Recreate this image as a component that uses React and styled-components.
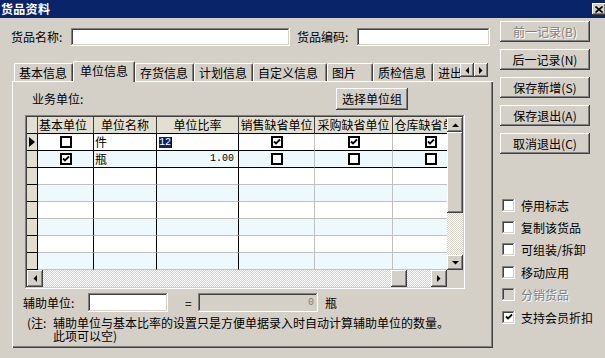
import React from 'react';
import styled, { createGlobalStyle, css } from 'styled-components';

const FONT = '"Noto Sans CJK SC", "Noto Sans", sans-serif';
const MONO = '"Liberation Mono", "DejaVu Sans Mono", monospace';

const GlobalStyle = createGlobalStyle`
  html, body { margin: 0; padding: 0; background: #d4d0c8; }
  body { font-family: ${FONT}; font-size: 12px; color: #000; }
  * { box-sizing: border-box; }
`;

const raised = css`
  background: #d4d0c8;
  box-shadow: inset -1px -1px #404040, inset 1px 1px #ffffff, inset -2px -2px #808080, inset 2px 2px #d4d0c8;
`;

const sunken = css`
  box-shadow: inset -1px -1px #ffffff, inset 1px 1px #808080, inset -2px -2px #d4d0c8, inset 2px 2px #404040;
`;

const checker = css`
  background: repeating-conic-gradient(#ffffff 0% 25%, #d4d0c8 0% 50%) 0 0 / 2px 2px;
`;

const Window = styled.div`
  width: 605px;
  height: 358px;
  background: #d4d0c8;
  overflow: hidden;
  display: flex;
  flex-direction: column;
`;

const TitleBar = styled.div`
  flex: 0 0 18px;
  height: 18px;
  background: #0a246a;
  display: flex;
  align-items: center;
  justify-content: space-between;
  overflow: hidden;
`;

const TitleText = styled.span`
  color: #fff;
  font-weight: bold;
  font-size: 12px;
  line-height: 18px;
  padding-left: 1px;
  letter-spacing: 0.3px;
`;

const CloseButton = styled.div`
  ${raised};
  width: 14px;
  height: 12px;
  margin-right: -1px;
  display: flex;
  align-items: center;
  justify-content: center;
`;

const Main = styled.div`
  flex: 1;
  display: flex;
  padding-top: 3px;
`;

const LeftPane = styled.div`
  flex: 0 0 493px;
  display: flex;
  flex-direction: column;
`;

const FieldRow = styled.div`
  margin-top: 7px;
  height: 18px;
  display: flex;
  align-items: center;
  padding-left: 11px;
`;

const Label = styled.span`
  flex: 0 0 ${(p) => p.$w}px;
  margin-left: ${(p) => p.$ml || 0}px;
  line-height: 14px;
  white-space: nowrap;
  color: ${(p) => (p.$disabled ? '#808080' : '#000')};
  text-shadow: ${(p) => (p.$disabled ? '1px 1px #fff' : 'none')};
`;

const TextBox = styled.div`
  ${sunken};
  flex: 0 0 ${(p) => p.$w}px;
  height: ${(p) => p.$h || 18}px;
  background: ${(p) => (p.$disabled ? '#d4d0c8' : '#fff')};
  color: #808080;
  font-family: ${MONO};
  font-size: 10px;
  display: flex;
  align-items: center;
  justify-content: flex-end;
  padding-right: 4px;
`;

const Tabs = styled.div`
  margin-left: 12px;
  width: 481px;
  display: flex;
  flex-direction: column;
`;

const TabStrip = styled.div`
  margin-top: 15px;
  height: 21px;
  margin-bottom: -1px;
  display: flex;
  align-items: flex-start;
  position: relative;
  z-index: 1;
`;

const TabList = styled.div`
  width: 448px;
  height: 21px;
  padding-left: 2px;
  display: flex;
  align-items: flex-end;
  overflow: hidden;
`;

const Tab = styled.div`
  flex: 0 0 ${(p) => p.$w}px;
  height: ${(p) => (p.$active ? 21 : 18)}px;
  margin-bottom: ${(p) => (p.$active ? 0 : 1)}px;
  padding: ${(p) => (p.$active ? '0 0 2px 6px' : '0 0 0 4px')};
  background: #d4d0c8;
  border-top: 1px solid #fff;
  border-left: 1px solid #fff;
  border-right: 1px solid #404040;
  border-radius: 2px 2px 0 0;
  box-shadow: inset -1px 0 #808080;
  display: flex;
  align-items: center;
  white-space: nowrap;
  line-height: 14px;
`;

const TabArrows = styled.div`
  margin-top: 2px;
  display: flex;
`;

const SmallButton = styled.div`
  ${raised};
  width: ${(p) => p.$w || 14}px;
  height: ${(p) => p.$h || 14}px;
  flex: 0 0 auto;
  display: flex;
  align-items: center;
  justify-content: center;
`;

const Panel = styled.div`
  width: 481px;
  height: 267px;
  padding: 7px 0 0 13px;
  box-shadow: inset 1px 1px #ffffff, inset -1px -1px #404040, inset -2px -2px #808080;
`;

const PanelHeader = styled.div`
  width: 440px;
  height: 22px;
  padding: 0 57px 0 7px;
  display: flex;
  align-items: center;
  justify-content: space-between;
`;

const PushButton = styled.div`
  ${raised};
  width: ${(p) => p.$w || 90}px;
  height: ${(p) => p.$h || 21}px;
  display: flex;
  align-items: center;
  justify-content: center;
  white-space: nowrap;
  line-height: 14px;
  color: ${(p) => (p.$disabled ? '#808080' : '#000')};
  text-shadow: ${(p) => (p.$disabled ? '1px 1px #fff' : 'none')};
`;

const GridFrame = styled.div`
  ${sunken};
  margin-top: 5px;
  width: 440px;
  height: 174px;
  padding: 2px;
  background: #d4d0c8;
  display: flex;
  flex-direction: column;
`;

const GridBody = styled.div`
  display: flex;
  height: 153px;
`;

const GridTable = styled.div`
  width: 420px;
  overflow: hidden;
  background: #fff;
`;

const GridRow = styled.div`
  display: flex;
  height: 17px;
  background: ${(p) => p.$bg};
`;

const Cell = styled.div`
  flex: 0 0 ${(p) => p.$w}px;
  height: 17px;
  border-right: 1px solid ${(p) => p.$line};
  border-bottom: 1px solid ${(p) => p.$bottom};
  background: ${(p) => p.$bg || 'transparent'};
  display: flex;
  align-items: center;
  justify-content: ${(p) => p.$align || 'center'};
  padding: ${(p) => (p.$align === 'flex-start' ? '0 0 0 1px' : p.$align === 'flex-end' ? '0 4px 0 0' : '0')};
  overflow: hidden;
  white-space: nowrap;
  line-height: 14px;
`;

const GridCheck = styled.span`
  width: 12px;
  height: 12px;
  border: 2px solid #000;
  background: #fff;
  display: flex;
  align-items: center;
  justify-content: center;
`;

const Selected = styled.span`
  background: #0a246a;
  color: #fff;
  font-family: ${MONO};
  font-size: 10px;
  line-height: 11px;
  height: 11px;
  margin-left: 1px;
  border-right: 1px solid #000;
`;

const Number = styled.span`
  font-family: ${MONO};
  font-size: 10px;
`;

const VScroll = styled.div`
  width: 16px;
  display: flex;
  flex-direction: column;
`;

const Thumb = styled.div`
  ${raised};
  flex: 0 0 ${(p) => p.$size}px;
`;

const Track = styled.div`
  ${checker};
  flex: ${(p) => (p.$size ? `0 0 ${p.$size}px` : '1')};
`;

const HScroll = styled.div`
  display: flex;
  height: 17px;
`;

const HTrack = styled.div`
  width: 420px;
  display: flex;
`;

const Corner = styled.div`
  width: 16px;
  background: #d4d0c8;
`;

const AuxRow = styled.div`
  margin-top: 4px;
  margin-left: -2px;
  height: 19px;
  display: flex;
  align-items: center;
`;

const Note = styled.div`
  margin-top: 4px;
  margin-left: 2px;
  display: flex;
  line-height: 13px;
`;

const NotePrefix = styled.span`
  flex: 0 0 26px;
`;

const SidePane = styled.div`
  flex: 0 0 90px;
  margin-left: 7px;
  display: flex;
  flex-direction: column;
`;

const ButtonStack = styled.div`
  display: flex;
  flex-direction: column;
  gap: 7px;
`;

const OptionList = styled.div`
  margin-top: 40px;
  display: flex;
  flex-direction: column;
`;

const Option = styled.div`
  height: 22.4px;
  display: flex;
  align-items: center;
  padding-left: 2px;
  color: ${(p) => (p.$disabled ? '#808080' : '#000')};
  text-shadow: ${(p) => (p.$disabled ? '1px 1px #fff' : 'none')};
  white-space: nowrap;
`;

const Box = styled.span`
  ${sunken};
  flex: 0 0 13px;
  width: 13px;
  height: 13px;
  margin-right: 6px;
  background: ${(p) => (p.$disabled ? '#d4d0c8' : '#fff')};
  display: flex;
  align-items: center;
  justify-content: center;
`;

const Check = () => (
  <svg width="8" height="8" viewBox="0 0 8 8">
    <path d="M1 3.5 L3 5.5 L7 1.5" stroke="#000" strokeWidth="1.8" fill="none" />
  </svg>
);

const Arrow = ({ dir }) => {
  const shapes = {
    up: '0,4 7,4 3.5,0.5',
    down: '0,0 7,0 3.5,3.5',
    left: '4,0 4,7 0.5,3.5',
    right: '0,0 0,7 3.5,3.5',
  };
  const horizontal = dir === 'left' || dir === 'right';
  return (
    <svg width={horizontal ? 4 : 7} height={horizontal ? 7 : 4} viewBox={horizontal ? '0 0 4 7' : '0 0 7 4'}>
      <polygon points={shapes[dir]} fill="#000" />
    </svg>
  );
};

const columns = [
  { key: 'ind', w: 11, line: '#000' },
  { key: 'base', title: '基本单位', w: 56, line: '#000', headAlign: 'flex-start' },
  { key: 'name', title: '单位名称', w: 63, line: '#000' },
  { key: 'rate', title: '单位比率', w: 82, line: '#000' },
  { key: 'sale', title: '销售缺省单位', w: 76, line: '#c0c0c0' },
  { key: 'buy', title: '采购缺省单位', w: 78, line: '#c0c0c0' },
  { key: 'store', title: '仓库缺省单位', w: 76, line: '#c0c0c0' },
];

const rows = [
  { current: true, base: false, name: '件', rate: 'edit', sale: true, buy: true, store: true },
  { base: true, name: '瓶', rate: '1.00', sale: false, buy: false, store: false },
  {}, {}, {}, {}, {}, {},
];

const tabs = [
  { label: '基本信息', w: 59 },
  { label: '单位信息', w: 62, active: true },
  { label: '存货信息', w: 59 },
  { label: '计划信息', w: 59 },
  { label: '自定义信息', w: 74 },
  { label: '图片', w: 46 },
  { label: '质检信息', w: 60 },
  { label: '进出库信息', w: 74 },
];

const sideButtons = [
  { label: '前一记录(B)', disabled: true },
  { label: '后一记录(N)' },
  { label: '保存新增(S)' },
  { label: '保存退出(A)' },
  { label: '取消退出(C)' },
];

const options = [
  { label: '停用标志' },
  { label: '复制该货品' },
  { label: '可组装/拆卸' },
  { label: '移动应用' },
  { label: '分销货品', disabled: true },
  { label: '支持会员折扣', checked: true },
];

const renderCell = (col, row) => {
  if (col.key === 'ind') {
    return row.current ? (
      <svg width="6" height="10" viewBox="0 0 6 10">
        <polygon points="0,0 6,5 0,10" fill="#000" />
      </svg>
    ) : null;
  }
  const v = row[col.key];
  if (v === undefined) return null;
  if (typeof v === 'boolean') {
    return <GridCheck>{v && <Check />}</GridCheck>;
  }
  if (v === 'edit') return <Selected>12</Selected>;
  if (col.key === 'rate') return <Number>{v}</Number>;
  return v;
};

const cellAlign = (col, row) => {
  const v = row[col.key];
  if (col.key === 'name') return 'flex-start';
  if (col.key === 'rate') return v === 'edit' ? 'flex-start' : 'flex-end';
  return 'center';
};

const App = () => {
  return (
    <Window>
      <GlobalStyle />
      <TitleBar>
        <TitleText>货品资料</TitleText>
        <CloseButton>
          <svg width="8" height="7" viewBox="0 0 8 7">
            <path d="M0.5 0.5 L7.5 6.5 M7.5 0.5 L0.5 6.5" stroke="#000" strokeWidth="1.6" />
          </svg>
        </CloseButton>
      </TitleBar>
      <Main>
        <LeftPane>
          <FieldRow>
            <Label $w={60}>货品名称:</Label>
            <TextBox $w={219} />
            <Label $w={60} $ml={7}>货品编码:</Label>
            <TextBox $w={133} />
          </FieldRow>
          <Tabs>
            <TabStrip>
              <TabList>
                {tabs.map((t) => (
                  <Tab key={t.label} $w={t.w} $active={t.active}>{t.label}</Tab>
                ))}
              </TabList>
              <TabArrows>
                <SmallButton><Arrow dir="left" /></SmallButton>
                <SmallButton><Arrow dir="right" /></SmallButton>
              </TabArrows>
            </TabStrip>
            <Panel>
              <PanelHeader>
                <Label $w={60}>业务单位:</Label>
                <PushButton $w={72} $h={22}>选择单位组</PushButton>
              </PanelHeader>
              <GridFrame>
                <GridBody>
                  <GridTable>
                    <GridRow $bg="#e2dfd0">
                      {columns.map((c) => (
                        <Cell key={c.key} $w={c.w} $line="#404040" $bottom="#000" $align={c.headAlign}>
                          {c.title}
                        </Cell>
                      ))}
                    </GridRow>
                    {rows.map((r, i) => (
                      <GridRow key={i} $bg={i % 2 ? '#eef9fd' : '#ffffff'}>
                        {columns.map((c) => (
                          <Cell
                            key={c.key}
                            $w={c.w}
                            $line={c.line}
                            $bottom={c.key === 'ind' || i < 2 ? '#000' : '#c0c0c0'}
                            $bg={c.key === 'ind' ? '#e2dfd0' : undefined}
                            $align={cellAlign(c, r)}
                          >
                            {renderCell(c, r)}
                          </Cell>
                        ))}
                      </GridRow>
                    ))}
                  </GridTable>
                  <VScroll>
                    <SmallButton $w={16} $h={15}><Arrow dir="up" /></SmallButton>
                    <Thumb $size={81} />
                    <Track />
                    <SmallButton $w={16} $h={15}><Arrow dir="down" /></SmallButton>
                  </VScroll>
                </GridBody>
                <HScroll>
                  <HTrack>
                    <SmallButton $w={16} $h={17}><Arrow dir="left" /></SmallButton>
                    <Track />
                    <Thumb $size={16} />
                    <Track $size={24} />
                    <SmallButton $w={16} $h={17}><Arrow dir="right" /></SmallButton>
                  </HTrack>
                  <Corner />
                </HScroll>
              </GridFrame>
              <AuxRow>
                <Label $w={65}>辅助单位:</Label>
                <TextBox $w={80} $h={19} />
                <Label $w={13} $ml={17}>=</Label>
                <TextBox $w={120} $h={19} $disabled>0</TextBox>
                <Label $w={20} $ml={7}>瓶</Label>
              </AuxRow>
              <Note>
                <NotePrefix>(注:</NotePrefix>
                <span>
                  辅助单位与基本比率的设置只是方便单据录入时自动计算辅助单位的数量。
                  <br />
                  此项可以空)
                </span>
              </Note>
            </Panel>
          </Tabs>
        </LeftPane>
        <SidePane>
          <ButtonStack>
            {sideButtons.map((b) => (
              <PushButton key={b.label} $disabled={b.disabled}>{b.label}</PushButton>
            ))}
          </ButtonStack>
          <OptionList>
            {options.map((o) => (
              <Option key={o.label} $disabled={o.disabled}>
                <Box $disabled={o.disabled}>{o.checked && <Check />}</Box>
                {o.label}
              </Option>
            ))}
          </OptionList>
        </SidePane>
      </Main>
    </Window>
  );
};

export default App;
